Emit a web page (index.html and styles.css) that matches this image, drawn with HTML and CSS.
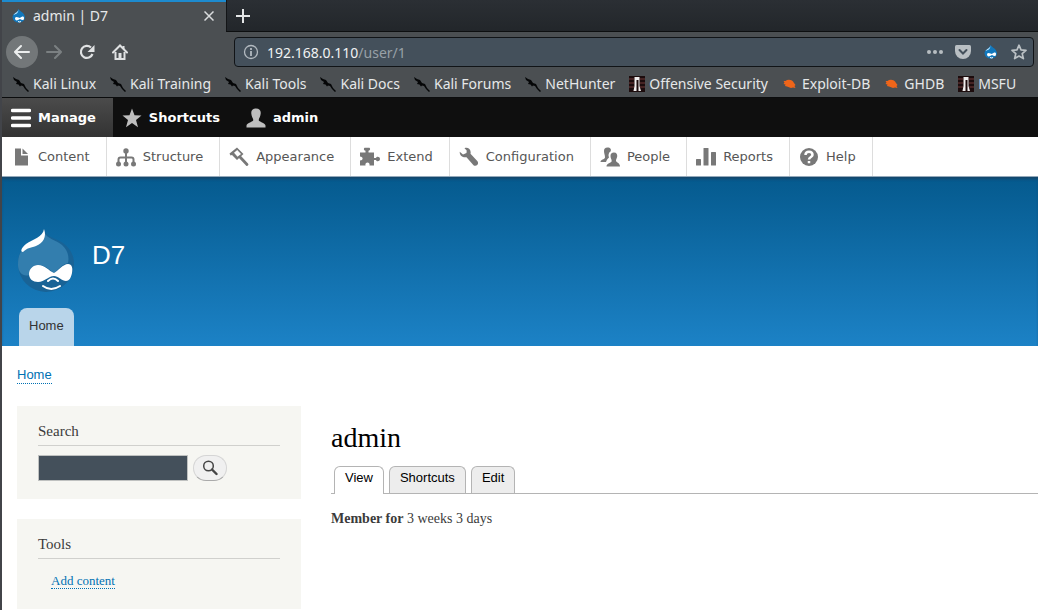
FILE: index.html
```
<!DOCTYPE html>
<html lang="en">
<head>
<meta charset="utf-8">
<title>admin | D7</title>
<link rel="stylesheet" href="styles.css">
</head>
<body>
<svg class="defs" aria-hidden="true">
  <defs>
    <symbol id="kali" viewBox="0 0 16 16"><path d="M0 1l3 2 3 1 2 3 3 1 2 4 3 3-1 1-3-3-2-3-2-.5-1 1-1.500-2L3 8l1-2-3-2z" fill="#050607"/></symbol>
    <symbol id="offsec" viewBox="0 0 16 16"><path d="M0 0h16v16H0z" fill="#1c0c0d"/><path d="M0 3h5M11 3h5M0 7h5M11 7h5M0 11h5M11 11h5" stroke="#713b3a"/><path d="M5.500 1h5v9l1.500 5H9.500V4h-2v11H4.500l1-5z" fill="#f1eeee"/></symbol>
    <symbol id="bug" viewBox="0 0 16 16"><path d="M1.500 5l2 0L5 4q5-1 7 3l1.500 2-1 1 1 2-2.500-.5-2 .5-4-1.500-2-.5.5-1.500L1.500 8l1-1.500z" fill="#ef6519"/></symbol>
    <symbol id="drop" viewBox="0 0 16 16"><path d="M7.500 1c1 2 6.500 4 6.500 8.500a6.300 6 0 0 1-12.500 0C1.500 5.500 6 5 7.500 1z" fill="#1278bd"/><path d="M7.500 1c.5 3-3.500 3.500-5 6 2-1 5-1 5-6z" fill="#c8e9fb"/><path d="M4 10c1-2 4 0 5 0 2-2 4-2 4 0 0 3-2 2-4 1-3 2-5 2-5-1z" fill="#fff"/><path d="M7 13.500q2 1 3 0" stroke="#fff" fill="none"/></symbol>
  </defs>
</svg>

<div class="window">
  <header class="browser">
    <div class="tabstrip">
      <div class="tab">
        <svg class="icon16" aria-hidden="true"><use href="#drop"/></svg>
        <span class="tab-title">admin | D7</span>
        <button class="chrome-btn tab-close" aria-label="Close tab"><svg width="10" height="10" viewBox="0 0 10 10"><path d="M.5.5l9 9M9.500.5l-9 9" stroke="#d9dcdd" stroke-width="1.500"/></svg></button>
      </div>
      <button class="chrome-btn tab-new" aria-label="New tab"><svg width="14" height="14" viewBox="0 0 14 14"><path d="M7 0v14M0 7h14" stroke="#e3e5e6" stroke-width="2"/></svg></button>
    </div>

    <div class="navbar">
      <button class="chrome-btn back" aria-label="Back"><svg width="16" height="16" viewBox="0 0 16 16" fill="none" stroke="#eceeee" stroke-width="2" stroke-linecap="round"><path d="M1 8h14M7 2L1 8l6 6"/></svg></button>
      <button class="chrome-btn nav-btn" aria-label="Forward"><svg width="16" height="16" viewBox="0 0 16 16" fill="none" stroke="#7b8082" stroke-width="2" stroke-linecap="round"><path d="M1 8h14M9 2l6 6-6 6"/></svg></button>
      <button class="chrome-btn nav-btn" aria-label="Reload"><svg width="16" height="16" viewBox="0 0 16 16"><path d="M12 3.500A6 6 0 1 0 13.500 10" fill="none" stroke="#e0e2e3" stroke-width="2.200"/><path d="M15.500 1v7H8.500z" fill="#e0e2e3"/></svg></button>
      <button class="chrome-btn nav-btn" aria-label="Home"><svg width="16" height="16" viewBox="0 0 16 16" fill="none" stroke="#e0e2e3" stroke-width="2"><path d="M1 8.500L8 1.500l7 7" stroke-linecap="round"/><path d="M3.500 8v7h9V8M11.500 2v3"/><path d="M8 9v5" stroke-width="3"/></svg></button>
      <div class="urlbar">
        <svg class="icon16" viewBox="0 0 16 16" fill="none" stroke="#b3bac0"><circle cx="8" cy="8" r="6.500" stroke-width="1.300"/><path d="M8 7v5M8 4v2" stroke-width="1.800"/></svg>
        <a class="url" href="#"><span class="host">192.168.0.110</span>/user/1</a>
        <button class="chrome-btn" aria-label="Page actions"><svg class="icon16" viewBox="0 0 16 16" fill="#b7bdc1"><circle cx="2" cy="8" r="2"/><circle cx="8" cy="8" r="2"/><circle cx="14" cy="8" r="2"/></svg></button>
        <button class="chrome-btn" aria-label="Save to Pocket"><svg class="icon16" viewBox="0 0 16 16"><path d="M1.500 1h13Q16 1 16 2.500V7a8 8 0 0 1-16 0V2.500Q0 1 1.500 1z" fill="#b9bfc3"/><path d="M4.500 6L8 9.500 11.500 6" fill="none" stroke="#44505b" stroke-width="2" stroke-linecap="round"/></svg></button>
        <button class="chrome-btn" aria-label="Drupal"><svg class="icon16"><use href="#drop"/></svg></button>
        <button class="chrome-btn" aria-label="Bookmark this page"><svg class="icon16" viewBox="0 0 16 16"><path d="M8 1.200l2 4.600 5 .5-3.800 3.300 1.200 5L8 12l-4.400 2.600 1.200-5L1 6.300l5-.5z" fill="none" stroke="#bbc1c5" stroke-width="1.700" stroke-linejoin="round"/></svg></button>
      </div>
    </div>

    <nav class="bookmarks" aria-label="Bookmarks">
      <a href="#"><svg class="icon16"><use href="#kali"/></svg>Kali Linux</a>
      <a href="#"><svg class="icon16"><use href="#kali"/></svg>Kali Training</a>
      <a href="#"><svg class="icon16"><use href="#kali"/></svg>Kali Tools</a>
      <a href="#"><svg class="icon16"><use href="#kali"/></svg>Kali Docs</a>
      <a href="#"><svg class="icon16"><use href="#kali"/></svg>Kali Forums</a>
      <a href="#"><svg class="icon16"><use href="#kali"/></svg>NetHunter</a>
      <a href="#"><svg class="icon16"><use href="#offsec"/></svg>Offensive Security</a>
      <a href="#"><svg class="icon16"><use href="#bug"/></svg>Exploit-DB</a>
      <a href="#"><svg class="icon16"><use href="#bug"/></svg>GHDB</a>
      <a href="#"><svg class="icon16"><use href="#offsec"/></svg>MSFU</a>
    </nav>
  </header>

  <nav class="toolbar" aria-label="Administration toolbar">
    <a class="active" href="#"><svg class="icon20" viewBox="0 0 20 20"><path d="M1.500 2.500h17M1.500 10h17M1.500 17.500h17" stroke="#fff" stroke-width="3.400" stroke-linecap="round"/></svg>Manage</a>
    <a href="#"><svg class="icon20" viewBox="0 0 20 20"><path d="M10 .5l2.500 6.800 7 .3-5.500 4.400 2 7.200-6-4.100-6 4.100 2-7.200L.5 7.600l7-.3z" fill="#bebebe"/></svg>Shortcuts</a>
    <a href="#"><svg class="icon20" viewBox="0 0 20 20"><path d="M10 .5c3.500 0 5 2 4.700 5-.2 3-1.700 4.500-2 6.500 0 2 6.300 2.500 6.800 5.500v2H.5v-2C1 14.500 7.300 14 7.300 12c-.3-2-1.800-3.500-2-6.500C5 2.500 6.500.5 10 .5z" fill="#bebebe"/></svg>admin</a>
  </nav>

  <nav class="tray" aria-label="Administration menu">
    <a href="#"><svg class="icon20" viewBox="0 0 20 20" fill="#787878"><path d="M4 1.500h6v7h7v10H4z"/><path d="M11.500 1.500L17 7h-5.500z"/></svg>Content</a>
    <a href="#"><svg class="icon20" viewBox="0 0 20 20"><path d="M10 5v11M2.500 16v-3.500q0-2 2-2h11q2 0 2 2V16" fill="none" stroke="#787878" stroke-width="2"/><g fill="#787878"><circle cx="10" cy="4" r="2.700"/><circle cx="2.500" cy="17" r="2.500"/><circle cx="10" cy="17" r="2.500"/><circle cx="17.500" cy="17" r="2.500"/></g></svg>Structure</a>
    <a href="#"><svg class="icon20" viewBox="0 0 20 20"><path d="M8 .5L.5 6.500l1 2L3 8l5 5 6.500-6z" fill="#787878"/><path d="M8.200 3L5 5.800l3.500 4L12 7z" fill="#fff"/><path d="M11 10l7 7.500" stroke="#787878" stroke-width="2.800" stroke-linecap="round"/></svg>Appearance</a>
    <a href="#"><svg class="icon20" viewBox="0 0 20 20"><path d="M0 5.500h5.500V3.800C3.500 3.500 3.500.8 5 .8h4c1.500 0 1.500 2.700-.5 3v1.700H14V11h2c.5-2 4-1.500 4 1s-3.500 3-4 1h-2v5.500H9.500c1-4-5-4-4 0H0v-5c3.500 0 3.500-4 0-4z" fill="#787878"/></svg>Extend</a>
    <a href="#"><svg class="icon20" viewBox="0 0 20 20"><path d="M5.500 1.200c3.500-1.400 7 1.500 6 5.500l7 7.500c2 3-1.500 6-4 4l-7-8c-3.500.8-7-1.500-6.800-5.500L4 7.500 7.500 6l.2-2.500z" fill="#787878"/></svg>Configuration</a>
    <a href="#"><svg class="icon20" viewBox="0 0 20 20" fill="#787878"><path d="M7.500.5c3 0 4 2 3 4-2 1-2.500 4-1.500 6-1 1-2 1.500-3 4.500H.5c0-2.500 4-2.500 4.500-4.500C5 8 4 6.500 4 4 4 2 5 .5 7.500.5z"/><path d="M14 5.500c2.500 0 3.500 2 3.200 4s-1.500 3-1.200 4.500c.5 1.500 4 2 4 5.500H6.500c0-3.500 5-3.500 5.200-5.500 0-1.500-1.200-3-1.200-5s1-3.500 3.500-3.500z"/></svg>People</a>
    <a href="#"><svg class="icon20" viewBox="0 0 20 20" fill="#787878"><rect y="12" width="5" height="6.500" rx=".5"/><rect x="7.500" y="1" width="5" height="17.500" rx=".5"/><rect x="15" y="5" width="5" height="13.500" rx=".5"/></svg>Reports</a>
    <a href="#"><svg class="icon20" viewBox="0 0 20 20"><circle cx="10" cy="10" r="9" fill="#787878"/><path d="M6.500 8c0-4.500 7-4.500 7 0 0 2-3.500 2-3.500 4.500M10 14v2.200" fill="none" stroke="#fff" stroke-width="2.500"/></svg>Help</a>
  </nav>

  <header class="site-header">
    <a class="brand" href="#">
      <svg class="logo" viewBox="0 0 58 64" aria-hidden="true">
        <path d="M27 0c2 8 11 9 19 14 7 5 11 12 11 21a28 28 0 0 1-56 0C1 27 3 22 9 17 17 12 26 8 27 0z" fill="#196396"/>
        <path d="M27 3c3 7 12 8 18 13 7 6 7 14 6 18-6 1-11 8-14 10-4-3-9-8-16-8-6 0-9 4-9 10-5 2-11-2-11-10C1 27 3 22 9 17 17 12 25 10 27 3z" fill="#337eae"/>
        <path d="M27 0c3 8-1 14-8 17-6 2-9 2-13 6-3 0-2-4 3-8C16 10 26 8 27 0z" fill="#fff"/>
        <path d="M37 44c4-2 9-9 14-9 4 0 5 4 4 9-1 5-3 8-6 8-4 0-8-5-12-5-6 0-9 6-16 6-5 0-9-3-9-8s4-9 9-9c7 0 11 6 16 8z" fill="#fff"/>
        <path d="M31 52q5-5 10 0M26 57q8 6 17 0" fill="none" stroke="#fff" stroke-width="2" stroke-linecap="round"/>
      </svg>
      <span>D7</span>
    </a>
    <nav class="main-menu" aria-label="Main menu"><a href="#">Home</a></nav>
  </header>

  <main class="page">
    <nav class="breadcrumb" aria-label="Breadcrumb"><a class="dotted" href="#">Home</a></nav>
    <div class="columns">
      <aside class="sidebar">
        <section class="block">
          <h2><label for="search">Search</label></h2>
          <form class="search">
            <input id="search" type="text">
            <button type="button" aria-label="Search"><svg width="16" height="16" viewBox="0 0 16 16" fill="none" stroke="#454545"><circle cx="6.500" cy="6" r="4.800" stroke-width="1.500"/><path d="M10 9.500l4.500 4.500" stroke-width="2.400" stroke-linecap="round"/></svg></button>
          </form>
        </section>
        <section class="block tools">
          <h2>Tools</h2>
          <ul><li><a class="dotted" href="#">Add content</a></li></ul>
        </section>
      </aside>
      <article class="content">
        <h1>admin</h1>
        <nav class="tabs" aria-label="Tabs">
          <a class="current" href="#">View</a>
          <a href="#">Shortcuts</a>
          <a href="#">Edit</a>
        </nav>
        <p><strong>Member for</strong> 3 weeks 3 days</p>
      </article>
    </div>
  </main>
</div>
</body>
</html>
```
FILE: styles.css
```
* { box-sizing: border-box; }
body { margin: 0; background: #fff; overflow: hidden; }
a { color: inherit; text-decoration: none; }
.defs { display: none; }
.icon16 { width: 16px; height: 16px; flex: none; display: block; }
.icon20 { width: 20px; height: 20px; flex: none; }
.window { border-left: 2px solid #424449; min-height: 100vh; }

/* Browser chrome */
.browser {
  background: #4b4f52;
  color: #e6e8e9;
  font: 14px/20px "Noto Sans", sans-serif;
  border-bottom: 1px solid #0b0c0d;
}
.chrome-btn {
  display: flex;
  align-items: center;
  justify-content: center;
  padding: 0;
  border: 0;
  background: none;
}
.tabstrip {
  display: flex;
  height: 32px;
  background: linear-gradient(#2b2f34, #22262a);
}
.tab {
  display: flex;
  align-items: center;
  gap: 6px;
  width: 224px;
  padding: 0 12px 2px 9px;
  background: #4b4f52;
  border-top: 2px solid #1d8bcf;
}
.tab-title { flex: 1; }
.tab-new {
  flex: 1;
  justify-content: flex-start;
  padding-left: 9px;
  border-left: 1px solid #131517;
  border-bottom: 1px solid #0d0f10;
}
.navbar { display: flex; align-items: center; height: 40px; padding: 0 4px; }
.back { width: 32px; height: 32px; border-radius: 50%; background: #737779; }
.nav-btn { width: 32px; height: 32px; }
.nav-btn + .nav-btn { margin-left: 1px; }
.urlbar {
  flex: 1;
  display: flex;
  align-items: center;
  gap: 12px;
  height: 30px;
  margin-left: 98px;
  padding: 0 6px 0 8px;
  background: #44505b;
  border: 1px solid #111417;
  border-radius: 4px;
}
.url { flex: 1; margin-left: -4px; padding-top: 1px; color: #98a0a7; }
.host { color: #f0f2f3; }
.bookmarks { display: flex; gap: 14px; height: 25px; padding: 0 0 2px 11px; white-space: nowrap; }
.bookmarks a { display: flex; align-items: center; gap: 4px; }

/* Administration toolbar */
.toolbar, .tray { display: flex; font: 13px/20px "DejaVu Sans", sans-serif; }
.toolbar a, .tray a { display: flex; align-items: center; gap: 7px; padding: 0 16px 0 9px; }
.toolbar { height: 39px; background: #0f0f0f; color: #fff; font-weight: bold; }
.toolbar a { padding-right: 17px; }
.toolbar .active { background: linear-gradient(#4b4b4b, #333); }
.tray { height: 40px; color: #565656; border-bottom: 1px solid #93a9bb; }
.tray a { border-right: 1px solid #ddd; }

/* Site header */
.site-header {
  background: linear-gradient(#055a8e, #1c82c6);
  box-shadow: inset 0 3px 3px -1px #17466a;
  padding: 52px 15px 0;
  font-family: "Liberation Sans", sans-serif;
}
.brand { display: flex; gap: 17px; color: #fff; font-size: 26px; line-height: 52px; }
.logo { width: 58px; height: 64px; }
.main-menu { display: flex; padding: 15px 2px 0; }
.main-menu a {
  padding: 0 10px 2px;
  font-size: 13px;
  line-height: 36px;
  color: #333;
  background: #b9d5ea;
  border-radius: 8px 8px 0 0;
}

/* Page body */
.page { padding: 21px 0 0 15px; }
.breadcrumb { font: 13px/16px "Liberation Sans", sans-serif; }
.dotted { color: #0071b3; border-bottom: 1px dotted #0071b3; }
.breadcrumb .dotted { padding-bottom: 1px; }
.columns { display: flex; gap: 30px; padding-top: 23px; font-family: "Liberation Serif", serif; }
.sidebar { flex: 0 0 284px; }
.block { background: #f6f6f2; padding: 15px 21px 17px; margin-bottom: 20px; color: #3b3b3b; }
.block h2 {
  margin: 0 0 9px;
  padding-bottom: 4px;
  font-size: 15px;
  line-height: 20px;
  font-weight: normal;
  border-bottom: 1px solid #d0d0cd;
}
.search { display: flex; gap: 5px; padding-bottom: 1px; }
.search input { width: 150px; height: 26px; background: #44505b; border: 1px solid #bfc1c0; color: #fff; }
.search button {
  display: flex;
  align-items: center;
  justify-content: center;
  width: 34px;
  height: 26px;
  padding: 0 0 1px;
  background: #f0f0f0;
  border: 1px solid #d5d5d5;
  border-bottom-color: #aaa;
  border-radius: 13px;
}
.tools ul { list-style: none; margin: 0; padding: 4px 13px 2px; font-size: 13px; line-height: 18px; }
.content { flex: 1; color: #3b3b3b; }
.content h1 { margin: 15px 0 12px; font-size: 28px; line-height: 33px; font-weight: normal; color: #000; }
.tabs {
  display: flex;
  gap: 5px;
  padding-left: 3px;
  border-bottom: 1px solid #b4b4b4;
  font: 13px/22px "Liberation Sans", sans-serif;
  color: #000;
}
.tabs a {
  height: 27px;
  padding: 0 10px;
  background: #ededed;
  border: 1px solid #b4b4b4;
  border-bottom: 0;
  border-radius: 6px 6px 0 0;
}
.tabs .current { height: 28px; margin-bottom: -1px; background: #fff; }
.content p { margin: 15px 0; font-size: 14px; line-height: 20px; }
```
